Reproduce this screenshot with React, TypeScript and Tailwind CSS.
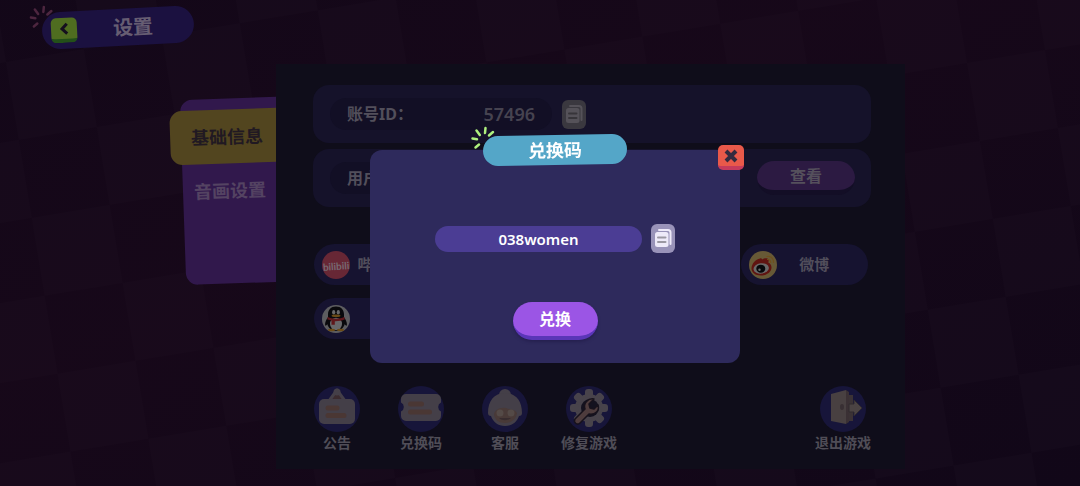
import type { ReactNode } from "react";

function Checkerboard() {
  return (
    <svg className="absolute inset-0 h-full w-full" aria-hidden="true">
      <defs>
        <pattern
          id="checker"
          width="158"
          height="158"
          patternUnits="userSpaceOnUse"
          patternTransform="translate(967 63) rotate(-9.4)"
        >
          <rect width="158" height="158" fill="#110718" />
          <rect width="79" height="79" fill="#140a1b" />
          <rect x="79" y="79" width="79" height="79" fill="#140a1b" />
        </pattern>
        <linearGradient id="glow" x1="0" x2="1" y1="0" y2="1">
          <stop offset="0" stopColor="#240a1c" stopOpacity="0.1" />
          <stop offset="0.4" stopColor="#240a1c" stopOpacity="0.3" />
          <stop offset="1" stopColor="#240a1c" stopOpacity="0" />
        </linearGradient>
      </defs>
      <rect width="100%" height="100%" fill="url(#checker)" />
      <rect width="100%" height="100%" fill="url(#glow)" />
    </svg>
  );
}

function Sparks({ className }: { className: string }) {
  return (
    <svg viewBox="0 0 24 24" className={className} fill="none" stroke="currentColor" strokeWidth="2.500" strokeLinecap="round" aria-hidden="true">
      <path d="M1.500 12.500l4.500 .8M5.500 4.500l3.300 4.500M14.500 2l-.5 5M22 6l-4 3.500M8 18.500l-3.500 3" />
    </svg>
  );
}

function CopyIcon() {
  return (
    <svg viewBox="0 0 24 29" className="h-full w-full" aria-hidden="true">
      <path d="M8 6h9a2.500 2.500 0 0 1 2.500 2.500V20" fill="none" stroke="currentColor" strokeWidth="2" strokeLinecap="round" />
      <rect x="4" y="8" width="13.500" height="15" rx="2.500" fill="currentColor" />
      <path d="M7 13.500h7.500M7 18h7.500" className="stroke-black/35" strokeWidth="2" strokeLinecap="round" />
    </svg>
  );
}

function BilibiliIcon() {
  return (
    <svg viewBox="0 0 28 28" className="size-7 shrink-0" aria-hidden="true">
      <circle cx="14" cy="14" r="14" fill="#672735" />
      <text x="14" y="19" textAnchor="middle" fontSize="10" fontWeight="700" fontFamily="Lato, sans-serif" fill="#776a73" transform="rotate(-4 14 14)">
        bilibili
      </text>
    </svg>
  );
}

function QQIcon() {
  return (
    <svg viewBox="0 0 28 28" className="size-7 shrink-0" aria-hidden="true">
      <circle cx="14" cy="14" r="14" fill="#5d5d60" />
      <path d="M14 1.500c-5.200 0-8 3.500-8 8v2.800c-1.700 2.200-3.200 5.200-2.900 7.800.1 1 1.200.6 2.300-.8.6 3 4 6.700 8.600 6.700s8-3.700 8.600-6.700c1.100 1.400 2.200 1.800 2.300.8.300-2.600-1.200-5.600-2.900-7.800V9.500c0-4.500-2.800-8-8-8z" fill="#09090c" />
      <ellipse cx="14" cy="19" rx="6" ry="6.200" fill="#68686a" />
      <ellipse cx="11.700" cy="7.300" rx="1.600" ry="2.200" fill="#68686a" />
      <ellipse cx="16.300" cy="7.300" rx="1.600" ry="2.200" fill="#68686a" />
      <ellipse cx="14" cy="10.800" rx="4.500" ry="1.300" fill="#6b4b16" />
      <path d="M5.800 12c5 2.300 11.400 2.300 16.400 0l.7 2.300c-3.200 1.500-6.700 2-10.100 1.900v3.500H9.500v-4.100c-1.500-.3-2.900-.8-4.300-1.300z" fill="#5f171b" />
      <ellipse cx="9.500" cy="25" rx="3.500" ry="1.200" fill="#6b4b16" />
      <ellipse cx="18.500" cy="25" rx="3.500" ry="1.200" fill="#6b4b16" />
    </svg>
  );
}

function WeiboIcon() {
  return (
    <svg viewBox="0 0 28 28" className="size-7 shrink-0" aria-hidden="true">
      <circle cx="14" cy="14" r="14" fill="#675936" />
      <path d="M2.500 17.500c0-4.500 4-9.500 8.600-10.100 1.200-.2 1.700.4 2 1.100 2.200-1.600 6.200-2 6.600.6.100.9-.1 1.700-.5 2.500 2 .9 3.300 2.500 3.300 4.900 0 4.600-4.900 8-10.700 8-5.200 0-9.300-2.800-9.300-7z" fill="#601411" />
      <ellipse cx="12.200" cy="17.500" rx="7.700" ry="5.200" fill="#6a6868" transform="rotate(-8 12 17.500)" />
      <ellipse cx="11.800" cy="17.700" rx="4.500" ry="4" fill="#07080b" />
      <circle cx="10.500" cy="18.800" r="1.200" fill="#6a6868" />
      <path d="M18.500 8.500c1.800-.2 3.200 1 3.200 3M18 5.500c4-.6 6.800 2.200 6.500 6" fill="none" stroke="#70501c" strokeWidth="1.200" strokeLinecap="round" />
    </svg>
  );
}

function NoticeIcon() {
  return (
    <svg viewBox="0 0 46 46" className="size-[46px]" aria-hidden="true">
      <path d="M15 15l8-11 8 11z" fill="#3b2b2f" stroke="#443f48" strokeWidth="3" strokeLinejoin="round" />
      <circle cx="23" cy="6" r="3.500" fill="#443f48" />
      <rect x="5" y="13" width="36" height="25" rx="5" fill="#443f48" />
      <path d="M14 22h9M14 29.500h16" stroke="#4a3734" strokeWidth="5" strokeLinecap="round" />
    </svg>
  );
}

function TicketIcon() {
  return (
    <svg viewBox="0 0 46 46" className="size-[46px]" aria-hidden="true">
      <path d="M8 8h30a5 5 0 0 1 5 5v3.500a5 5 0 0 0 0 9V30a5 5 0 0 1-5 5H8a5 5 0 0 1-5-5v-4.500a5 5 0 0 0 0-9V13a5 5 0 0 1 5-5z" fill="#443f48" />
      <path d="M12.500 18h11M12.500 26h19" stroke="#4a3734" strokeWidth="5" strokeLinecap="round" />
    </svg>
  );
}

function SupportIcon() {
  return (
    <svg viewBox="0 0 46 46" className="size-[46px]" aria-hidden="true">
      <circle cx="23" cy="9" r="6" fill="#443f48" />
      <path d="M6 27c0-12 6-20 17-20s17 8 17 20c0 2-1 3-3 3-2 6-7 10-14 10S11 36 9 30c-2 0-3-1-3-3z" fill="#443f48" />
      <path d="M12 29c0-4 5-8 12-7 4 2 9 1 11 5-.5 6-6 10-12 10s-10-3-11-8z" fill="#493a38" />
      <circle cx="18" cy="27" r="3.500" fill="#544a47" />
      <circle cx="29" cy="27" r="3.500" fill="#544a47" />
      <path d="M17 32c3 3 9 3 12 0z" fill="#382c2f" />
    </svg>
  );
}

function RepairIcon() {
  return (
    <svg viewBox="0 0 46 46" className="size-[46px]" aria-hidden="true">
      <g fill="#48434b">
        <circle cx="23" cy="22" r="14" />
        {[0, 45, 90, 135, 180, 225, 270, 315].map((angle) => (
          <rect key={angle} x="19" y="3" width="8" height="9" rx="3" transform={`rotate(${angle} 23 22)`} />
        ))}
      </g>
      <circle cx="24" cy="22" r="9" fill="#14121f" />
      <path d="M28 13c-6-1-11 4-9 10L9 33c-2 3 2 7 5 4l9-9c6 1 11-3 9-9l-4 4-4-1-1-4z" fill="#4e3c3d" stroke="#17121c" strokeWidth="1.500" strokeLinejoin="round" />
    </svg>
  );
}

function ExitIcon() {
  return (
    <svg viewBox="0 0 46 46" className="size-[46px]" aria-hidden="true">
      <path d="M24 9h9v26h-9z" fill="#3b3235" />
      <path d="M11 8l15-4v34l-15-3z" fill="#484041" />
      <path d="M26 4l3 2v30l-3 2z" fill="#3a3034" />
      <ellipse cx="22" cy="21" rx="2" ry="3" fill="#382f33" />
      <path d="M29 18h5v-4l8 8-8 8v-4h-5z" fill="#4b4343" stroke="#302a2e" />
    </svg>
  );
}

function SocialLink({ icon, label, className = "" }: { icon: ReactNode; label: string; className?: string }) {
  return (
    <a href="#" className={`flex h-[41px] items-center rounded-full bg-[#161330] pr-4 pl-2 text-[15px] text-[#514e5b] ${className}`}>
      {icon}
      <span className="flex-1 text-center whitespace-nowrap">{label}</span>
    </a>
  );
}

function ToolButton({ icon, label, className = "" }: { icon: ReactNode; label: string; className?: string }) {
  return (
    <button type="button" className={`flex w-[84px] flex-col items-center text-sm leading-[22px] text-[#504d57] ${className}`}>
      <span className="rounded-full bg-[#17153a]">{icon}</span>
      {label}
    </button>
  );
}

function RedeemDialog() {
  return (
    <div className="fixed inset-0 flex items-center justify-center pt-[27px] pl-[30px]">
      <section role="dialog" aria-labelledby="redeem-title" className="relative flex w-[370px] flex-col items-center rounded-xl bg-[#2e2a5c] pt-[74px] pb-[23px]">
        <Sparks className="absolute -top-6 left-[101px] size-6 text-[#aef07e]" />
        <div className="absolute -top-[15px] flex h-[30px] w-36 -rotate-1 items-center justify-center rounded-full bg-[#54a6c8]">
          <h2 id="redeem-title" className="text-lg text-white">兑换码</h2>
        </div>
        <button type="button" aria-label="关闭" className="absolute -top-[5px] -right-1 flex h-[25px] w-[26px] justify-center rounded-[5px] border-b-4 border-[#c63b5c] bg-[#e9594a] pt-1 text-[#342a3f]">
          <svg viewBox="0 0 14 14" className="size-3.5" fill="none" stroke="currentColor" strokeWidth="4" aria-hidden="true">
            <path d="M2 2l10 10M12 2L2 12" />
          </svg>
        </button>
        <div className="flex items-center gap-[9px]">
          <input
            aria-label="兑换码"
            defaultValue="038women"
            className="h-[26px] w-[207px] rounded-full bg-[#4b3d94] text-center text-[15px] font-semibold text-white outline-none"
          />
          <button type="button" aria-label="复制" className="h-[29px] w-6 rounded-md bg-[#9993b9] text-[#eeeaf9]">
            <CopyIcon />
          </button>
        </div>
        <button type="button" className="mt-[49px] h-[38px] w-[85px] rounded-[19px] border-b-4 border-[#5a36b8] bg-[#9b55e5] text-base text-white shadow-[0_2px_3px_#262150]">
          兑换
        </button>
      </section>
    </div>
  );
}

export default function App() {
  return (
    <div className="relative min-h-screen overflow-hidden bg-[#110718] font-['Noto_Sans','Noto_Sans_CJK_SC',sans-serif] font-bold">
      <Checkerboard />

      <div className="relative">
        <header className="h-16 pt-[9px] pl-[42px]">
          <div className="relative flex h-[37px] w-[152px] -rotate-3 items-center rounded-full bg-[#1b1140] pl-[9px]">
            <Sparks className="absolute -top-2 -left-3 size-6 rotate-3 text-[#4d263f]" />
            <button type="button" aria-label="返回" className="flex h-[25px] w-[26px] justify-center rounded-[5px] border-b-4 border-[#235019] bg-[#4f6d20] pt-1 text-[#150f1e]">
              <svg viewBox="0 0 14 14" className="size-3.5" fill="none" stroke="currentColor" strokeWidth="3" aria-hidden="true">
                <path d="M10 2L5 7l5 5" />
              </svg>
            </button>
            <h1 className="ml-9 text-xl text-[#665d72]">设置</h1>
          </div>
        </header>

        <main className="mr-[175px] ml-40 flex">
          <div className="w-[116px] shrink-0 overflow-hidden pt-[34px] pl-[23px]">
            <nav className="h-[185px] w-[120px] -rotate-2 rounded-xl bg-[#31184c] pt-[11px] text-lg">
              <a href="#" aria-current="page" className="-ml-[11px] flex h-[54px] items-center rounded-xl bg-[#52451f] pl-[21px] text-[#211922]">
                基础信息
              </a>
              <a href="#" className="flex h-[54px] items-center pl-[11px] text-[#544362]">
                音画设置
              </a>
            </nav>
          </div>

          <div className="flex-1 bg-[#0f0d1a] pt-[21px] pb-[15px]">
            <div className="mr-[34px] ml-[37px] flex flex-col gap-1.5">
              <div className="flex h-[58px] items-center gap-2.5 rounded-2xl bg-[#15122a] pl-[17px]">
                <div className="flex h-8 w-[222px] items-center justify-between rounded-full bg-[#120f25] px-[17px] text-[#524f5b]">
                  <span className="text-base">账号ID：</span>
                  <span className="text-lg font-semibold text-[#464350]">57496</span>
                </div>
                <button type="button" aria-label="复制账号ID" className="h-[29px] w-6 rounded-md bg-[#3a383f] text-[#555259]">
                  <CopyIcon />
                </button>
              </div>
              <div className="flex h-[58px] items-center justify-between rounded-2xl bg-[#15122a] pr-4 pl-[17px]">
                <div className="flex h-8 w-[222px] items-center rounded-full bg-[#120f25] px-[17px] text-base text-[#524f5b]">
                  用户协议：
                </div>
                <button type="button" className="h-[34px] w-[98px] rounded-[17px] border-b-[5px] border-[#130e26] bg-[#2c1a42] text-base leading-6 text-[#55505c]">
                  查看
                </button>
              </div>
            </div>

            <div className="mt-[37px] mr-[37px] ml-[38px] grid grid-cols-4 gap-x-[15px] gap-y-[13px]">
              <SocialLink icon={<BilibiliIcon />} label="哔哩哔哩" />
              <SocialLink icon={<WeiboIcon />} label="微博" className="col-start-4" />
              <SocialLink icon={<QQIcon />} label="QQ" />
            </div>

            <div className="mt-[47px] mr-5 ml-[19px] flex">
              <ToolButton icon={<NoticeIcon />} label="公告" />
              <ToolButton icon={<TicketIcon />} label="兑换码" />
              <ToolButton icon={<SupportIcon />} label="客服" />
              <ToolButton icon={<RepairIcon />} label="修复游戏" />
              <ToolButton icon={<ExitIcon />} label="退出游戏" className="ml-auto" />
            </div>
          </div>
        </main>
      </div>

      <RedeemDialog />
    </div>
  );
}
